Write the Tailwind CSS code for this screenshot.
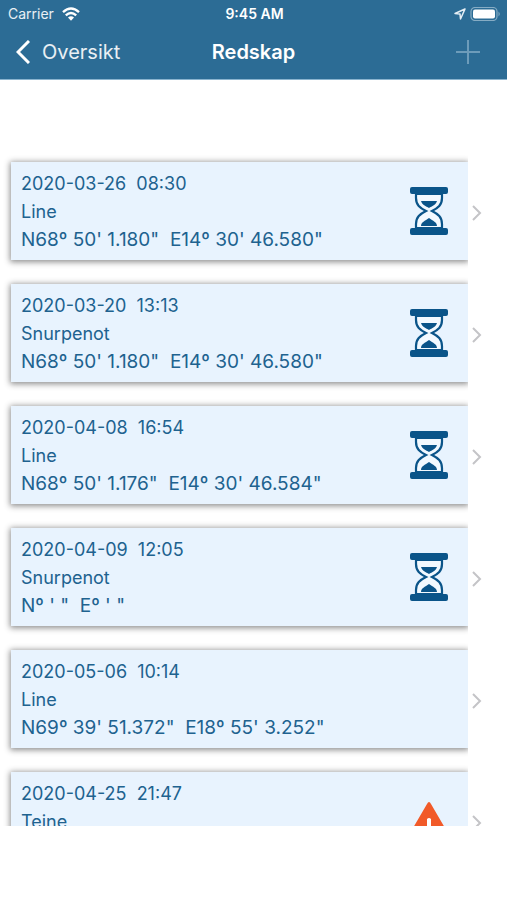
<!DOCTYPE html>
<html lang="nb">
<head>
  <meta charset="UTF-8">
  <title>Redskap</title>
  <meta name="viewport" content="width=device-width, initial-scale=1.0">
  <script src="https://cdn.jsdelivr.net/npm/@tailwindcss/browser@4"></script>
</head>
<body class="bg-white h-screen flex flex-col font-['Inter','Liberation_Sans',sans-serif]">
  <svg class="hidden">
    <symbol id="hourglass" viewBox="0 0 38 48">
      <path d="M6 7V11C6 18 10 21 16 24C10 27 6 30 6 37V41H32V37C32 30 28 27 22 24C28 21 32 18 32 11V7Z" fill="#f2f9ff" stroke="#0a5489" stroke-width="2.200"/>
      <path d="M11 14H27C26 18 22 19 19 21C16 19 12 18 11 14ZM11 39C11 35 15 34 19 31C23 34 27 35 27 39Z" fill="#0a5489"/>
      <path d="M2 0H36Q38 0 38 2V5Q38 7 36 7H2Q0 7 0 5V2Q0 0 2 0ZM2 41H36Q38 41 38 43V46Q38 48 36 48H2Q0 48 0 46V43Q0 41 2 41Z" fill="#0a5489"/>
    </symbol>
    <symbol id="warning" viewBox="0 0 48 46">
      <path d="M24 0Q25 0 26 2L47 38Q48 42 45 42H3Q0 42 1 38L22 2Q23 0 24 0Z" fill="#f15a29"/>
      <path d="M22 17Q24 15 26 17V30H22ZM22 34H26V38H22Z" fill="#fff"/>
    </symbol>
    <symbol id="chevron" viewBox="0 0 10 16">
      <path d="M1 1L8 8L1 15" fill="none" stroke="#c4c4c7" stroke-width="2"/>
    </symbol>
  </svg>

  <header class="bg-[#2c6c95] text-white border-b border-[#8ab4cf] shrink-0">
    <div class="grid grid-cols-3 items-center h-7 pl-2 pr-1.5 text-sm">
      <div class="flex items-center gap-2 text-white/90">
        <span>Carrier</span>
        <svg class="w-[18px] h-[14px]" viewBox="0 0 18 14" fill="none" stroke="#fff" stroke-width="2.4">
          <path d="M1 5.2Q9 -2 17 5.2"/>
          <path d="M3.8 8.3Q9 3.6 14.2 8.3"/>
          <path d="M6 10.6Q9 8 12 10.6L9 13.8Z" fill="#fff" stroke="none"/>
        </svg>
      </div>
      <div class="text-center font-semibold">9:45 AM</div>
      <div class="flex items-center justify-end gap-1">
        <svg class="w-3 h-3" viewBox="0 0 12 12" fill="none" stroke="#e6eff5" stroke-width="1.5" stroke-linejoin="round">
          <path d="M11 1L1 5.5L6 6L6.500 11Z"/>
        </svg>
        <svg class="w-[31px] h-[14px]" viewBox="0 0 31 14">
          <rect x="1" y="0.500" width="26" height="13" rx="4" fill="none" stroke="#86acc4" stroke-width="1.200"/>
          <rect x="3" y="2.500" width="22" height="9" rx="2" fill="#fff"/>
          <path d="M28.500 4.500Q31 7 28.500 9.500Z" fill="#86acc4"/>
        </svg>
      </div>
    </div>
    <nav class="grid grid-cols-3 items-center h-[51px] px-4 pb-1 text-xl">
      <a href="#" class="flex items-center gap-3">
        <svg class="w-[14px] h-6" viewBox="0 0 14 24" fill="none" stroke="#fff" stroke-width="3">
          <path d="M13 1L2 12L13 23"/>
        </svg>
        <span class="text-white/90">Oversikt</span>
      </a>
      <h1 class="text-center font-semibold">Redskap</h1>
      <button class="justify-self-end pr-[11px]" aria-label="Legg til" disabled>
        <svg class="w-6 h-6" viewBox="0 0 24 24" stroke="#6d9cba" stroke-width="2"><path d="M12 0V24M0 12H24"/></svg>
      </button>
    </nav>
  </header>

  <main class="flex-1 min-h-0 overflow-hidden mt-[70px] mb-[74px]">
    <ul id="list"></ul>
  </main>

  <script>
    const gear = [
      { time: '2020-03-26  08:30', type: 'Line', pos: 'N68º 50\' 1.180"  E14º 30\' 46.580"', icon: 'hourglass' },
      { time: '2020-03-20  13:13', type: 'Snurpenot', pos: 'N68º 50\' 1.180"  E14º 30\' 46.580"', icon: 'hourglass' },
      { time: '2020-04-08  16:54', type: 'Line', pos: 'N68º 50\' 1.176"  E14º 30\' 46.584"', icon: 'hourglass' },
      { time: '2020-04-09  12:05', type: 'Snurpenot', pos: 'Nº \' "  Eº \' "', icon: 'hourglass' },
      { time: '2020-05-06  10:14', type: 'Line', pos: 'N69º 39\' 51.372"  E18º 55\' 3.252"', icon: '' },
      { time: '2020-04-25  21:47', type: 'Teine', pos: '', icon: 'warning' }
    ];
    const icons = {
      hourglass: '<svg class="w-[38px] h-12 mr-[9px]"><use href="#hourglass"/></svg>',
      warning: '<svg class="w-12 h-[46px] mr-1 mt-2"><use href="#warning"/></svg>',
      '': ''
    };
    document.getElementById('list').innerHTML = gear.map(g => `
      <li>
        <a href="#" class="flex items-center">
          <div class="flex-1 overflow-hidden pl-[11px] py-3">
            <div class="flex items-center justify-between h-[98px] bg-[#e8f3fe] pl-[10px] pr-[11px] shadow-[0_1px_6px_1px_rgba(0,0,0,0.45)]">
              <div class="pt-0.5 text-lg leading-7 text-[#20628f] whitespace-pre"><p>${g.time}</p><p>${g.type}</p><p class="h-7 text-[19px]">${g.pos}</p></div>
              ${icons[g.icon]}
            </div>
          </div>
          <svg class="w-[10px] h-4 ml-1 mr-[25px] mt-1"><use href="#chevron"/></svg>
        </a>
      </li>`).join('');
  </script>
</body>
</html>
